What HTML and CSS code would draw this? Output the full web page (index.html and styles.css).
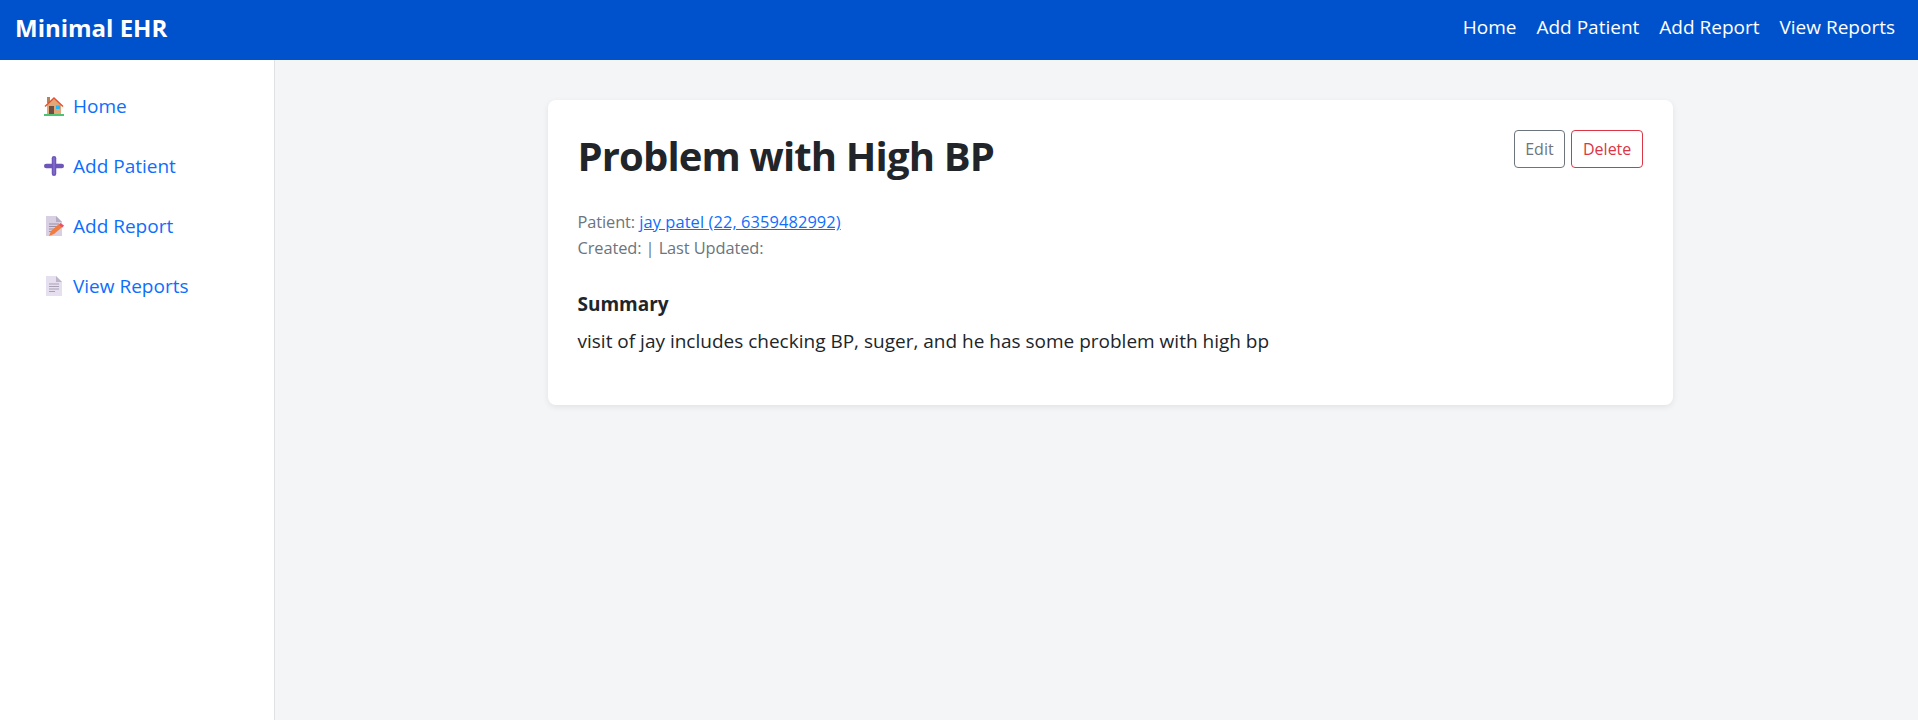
FILE: index.html
```html
<!DOCTYPE html>
<html lang="en">
  <head>
    <meta charset="UTF-8" />
    <meta name="viewport" content="width=device-width, initial-scale=1.0" />
    <title>Minimal EHR</title>
    <link rel="stylesheet" href="styles.css">
  </head>
  <body>
    <header class="topbar">
      <a class="brand" href="#">Minimal EHR</a>
      <nav class="topnav">
        <a href="#">Home</a>
        <a href="#">Add Patient</a>
        <a href="#">Add Report</a>
        <a href="#">View Reports</a>
      </nav>
    </header>

    <div class="layout">
      <aside class="sidebar">
        <a class="side-link" href="#">
          <svg class="side-icon" viewBox="0 0 20 20">
            <rect x="3" y="1" width="3" height="6" fill="#b5835a" />
            <path d="M3 9 10 2.5 17 9V18H3Z" fill="#e0a878" />
            <rect x="5" y="10" width="5" height="8" fill="#6d4c41" />
            <rect x="12" y="9.5" width="4" height="3.5" fill="#29b6f6" />
            <path d="M0.5 10 10 1l9.5 9-1 1L10 3 1.5 11Z" fill="#e5512f" />
            <rect x="0" y="18" width="20" height="2" fill="#4cc272" />
          </svg>
          Home
        </a>
        <a class="side-link" href="#">
          <svg class="side-icon" viewBox="0 0 20 20">
            <rect x="7.75" y="0" width="4.5" height="20" rx="2.25" fill="#6d56b8" />
            <rect x="0" y="7.75" width="20" height="4.5" rx="2.25" fill="#6d56b8" />
            <rect x="9.25" y="1.5" width="1.5" height="17" rx="0.75" fill="#8570cc" />
          </svg>
          Add Patient
        </a>
        <a class="side-link" href="#">
          <svg class="side-icon" viewBox="0 0 20 20">
            <path d="M2 0H12L18 6V20H2Z" fill="#d8cfe2" />
            <path d="M12 0 18 6H12Z" fill="#b5abc2" />
            <path d="M5 8H15M5 10.5H14M5 13H11M5 15.5H9" stroke="#9a90a5" stroke-width="1" />
            <path d="M5 20 7 15 15 8 19 10.5 10 18Z" fill="#f47b3e" />
            <path d="M16.5 7 20 9.5 18.5 11.5 15 9Z" fill="#e8506a" />
          </svg>
          Add Report
        </a>
        <a class="side-link" href="#">
          <svg class="side-icon" viewBox="0 0 20 20">
            <path d="M2 0H12L18 6V20H2Z" fill="#e6dff0" />
            <path d="M12 0 18 6H12Z" fill="#bdb4c9" />
            <path d="M5 8H15M5 10.5H15M5 13H15M5 15.5H11" stroke="#a9a0b4" stroke-width="1" />
          </svg>
          View Reports
        </a>
      </aside>

      <main class="content">
        <section class="card">
          <div class="card-head">
            <h1>Problem with High BP</h1>
            <div class="actions">
              <a class="btn btn-edit" href="#">Edit</a>
              <a class="btn btn-delete" href="#">Delete</a>
            </div>
          </div>
          <p class="meta">
            Patient: <a href="#">jay patel (22, 6359482992)</a><br />
            Created: | Last Updated:
          </p>
          <h2>Summary</h2>
          <p class="summary">visit of jay includes checking BP, suger, and he has some problem with high bp</p>
        </section>
      </main>
    </div>
  </body>
</html>
```

FILE: styles.css
```css
* {
  margin: 0;
  padding: 0;
  box-sizing: border-box;
}

body {
  font-family: "Open Sans", "Noto Sans", sans-serif;
  font-size: 16px;
  background-color: #f4f5f7;
  color: #212529;
}

a {
  text-decoration: none;
}

.topbar {
  height: 60px;
  padding: 0 23px 6px 15px;
  background-color: #0052cc;
  display: flex;
  align-items: center;
  justify-content: space-between;
}

.brand {
  color: #fff;
  font-size: 24px;
  font-weight: 700;
}

.topnav {
  display: flex;
  gap: 20px;
}

.topnav a {
  color: #fff;
  font-size: 19px;
}

.layout {
  display: flex;
  height: 660px;
}

.sidebar {
  width: 275px;
  background-color: #fff;
  border-right: 1px solid #dee2e6;
  padding-top: 16px;
}

.side-link {
  height: 60px;
  padding-left: 44px;
  display: flex;
  align-items: center;
  gap: 9px;
  color: #0d6efd;
  font-size: 19px;
}

.side-icon {
  width: 20px;
  height: 20px;
}

.content {
  flex: 1;
  padding: 40px 0 0 273px;
}

.card {
  width: 1125px;
  height: 305px;
  padding: 30px 30px 30px 29.5px;
  background-color: #fff;
  border-radius: 8px;
  box-shadow: 0 2px 6px rgba(0, 0, 0, 0.08);
}

.card-head {
  display: flex;
  justify-content: space-between;
  align-items: flex-start;
  margin-bottom: 27px;
}

h1 {
  font-size: 40px;
  font-weight: 700;
  line-height: 52px;
  letter-spacing: -0.85px;
}

.actions {
  display: flex;
  gap: 6px;
}

.btn {
  height: 38px;
  padding: 0 10.7px;
  display: flex;
  align-items: center;
  border: 1px solid;
  border-radius: 4px;
  font-size: 16px;
}

.btn-edit {
  color: #6c757d;
  border-color: #6c757d;
}

.btn-delete {
  color: #dc3545;
  border-color: #dc3545;
}

.meta {
  color: #6c757d;
  font-size: 16.4px;
  line-height: 26px;
  letter-spacing: -0.1px;
  margin-bottom: 31px;
}

.meta a {
  color: #0d6efd;
  text-decoration: underline;
  letter-spacing: 0.1px;
}

h2 {
  font-size: 19px;
  font-weight: 700;
  line-height: 24px;
  margin-bottom: 12px;
}

.summary {
  font-size: 19px;
  line-height: 26px;
}
```
